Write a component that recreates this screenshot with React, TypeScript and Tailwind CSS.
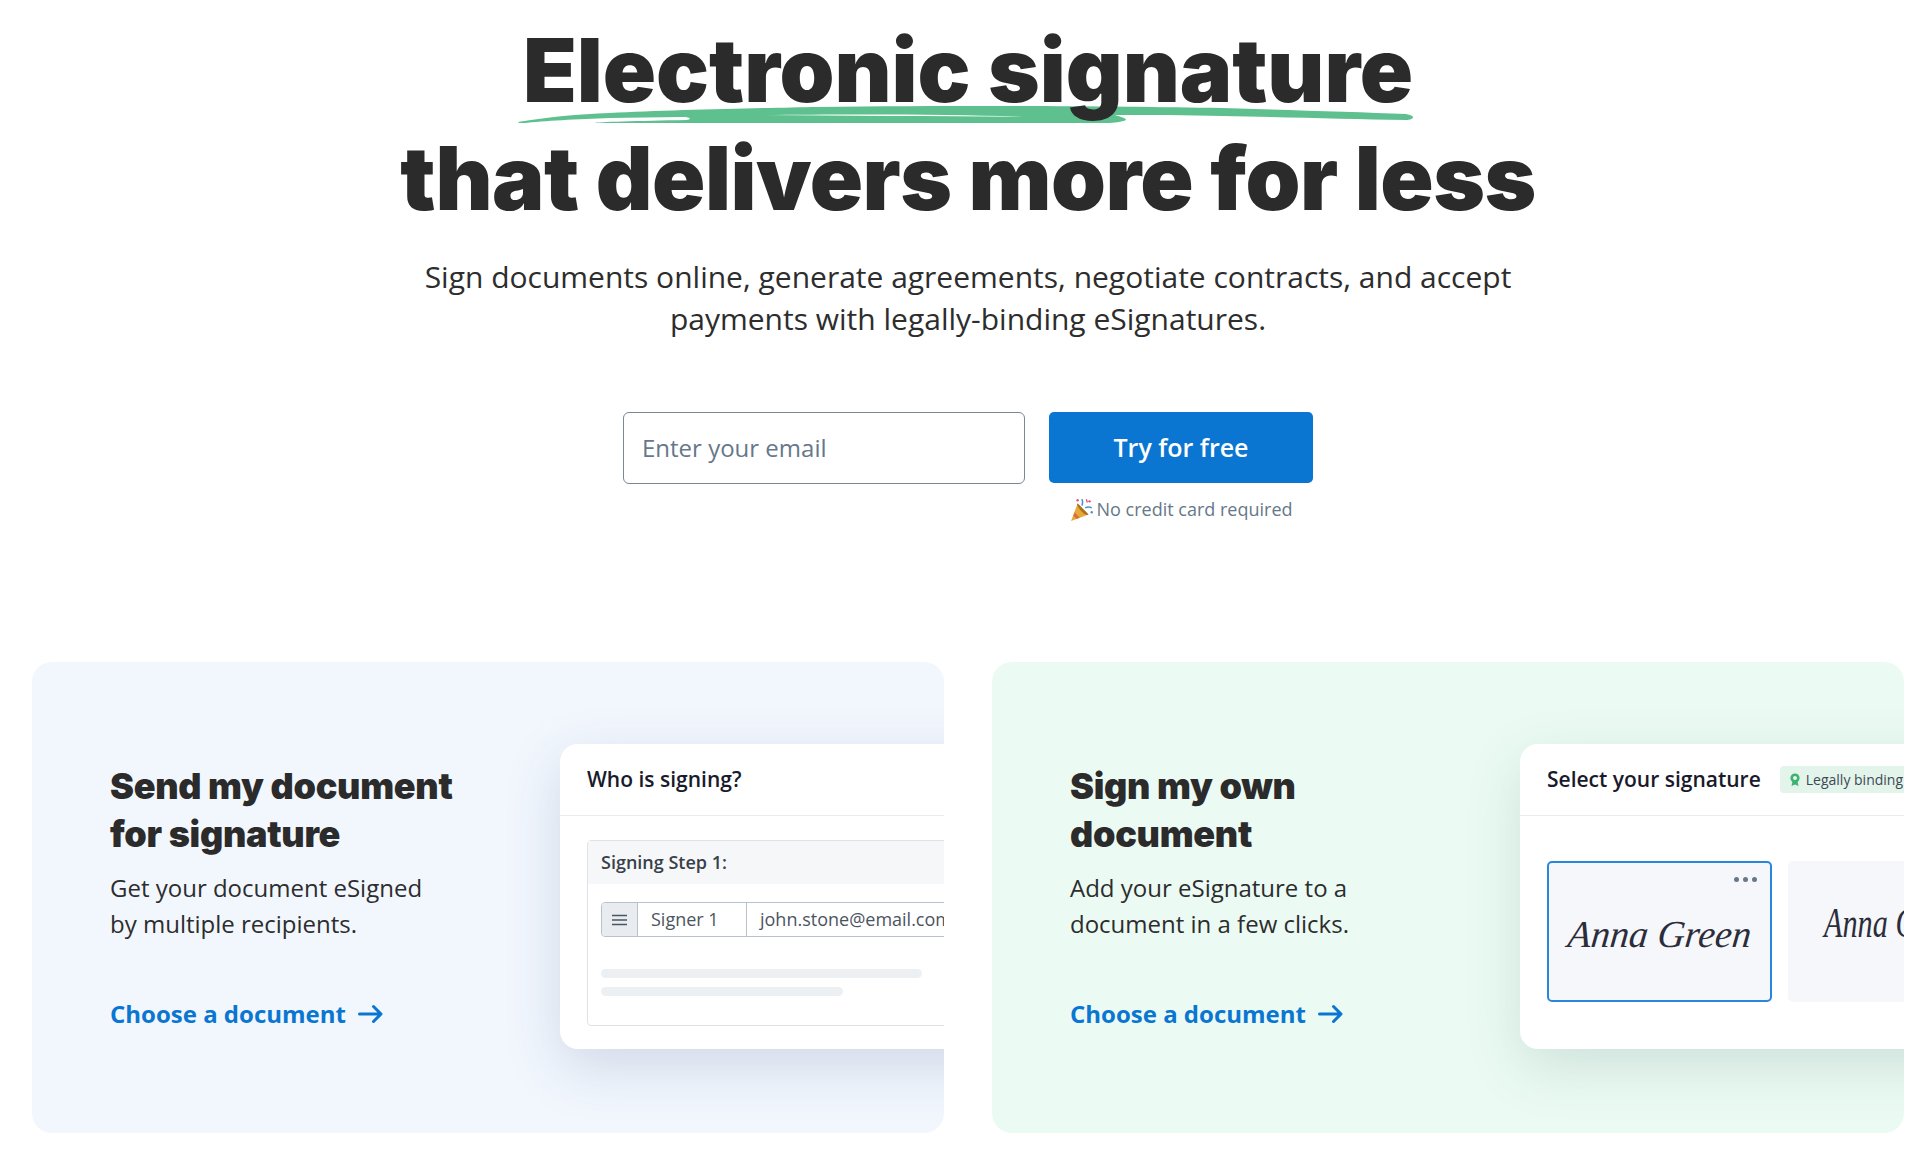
import React from "react";

const Arrow = () => (
  <svg width="25" height="20" viewBox="0 0 25 20" fill="none" stroke="#0a76d1" strokeWidth="3" strokeLinecap="round" strokeLinejoin="round">
    <path d="M1.5 10H23M15.5 2.5 23 10l-7.5 7.5" />
  </svg>
);

const Brush = () => (
  <svg className="absolute left-[518px] top-[105px] -z-10" width="895" height="18" viewBox="0 0 895 18" fill="#5fc08f">
    <path d="M0 17C30 12 60 9 92 8 150 5 245 3 300 2 360 1 420 1 475 1 560 1 640 2 704 3 770 5 840 7 888 9 893 10 895 11 895 12 895 14 892 15 888 15 830 14 770 12 704 11 670 10 630 10 597 10 603 12 608 13 608 15 604 17 596 18 589 18L77 18C75 17 120 16 168 15 176 14 170 12 165 12 140 12 115 13 92 13 60 14 25 16 6 18 2 18 0 18 0 17Z" />
    <path d="M245 10C330 9 440 9 513 12 430 11 330 11 245 10Z" fill="#ffffff" />
  </svg>
);

const Popper = () => (
  <svg width="25" height="25" viewBox="0 0 23 23">
    <path d="M7 6 1 22l16-6Z" fill="#e9a93a" />
    <path d="M4.2 14 9 19l-3 1.2-2.9-3Z" fill="#d9703a" />
    <path d="M7 6c3 3 7 7 10 10-1 1.2-3 .4-6-2.4S6 7 7 6Z" fill="#a9701f" />
    <path d="M11 8c1-2 1-4 0-6M14 10c2-1 4-1 6 0" fill="none" stroke="#4a90d9" strokeWidth="1.4" />
    <circle cx="7" cy="3" r="1.1" fill="#d8557a" />
    <circle cx="18" cy="4" r="1.1" fill="#d8557a" />
    <circle cx="20" cy="14" r="1.1" fill="#4a90d9" />
    <path d="M15 2l1 3" stroke="#d8557a" strokeWidth="1.2" />
  </svg>
);

const CardCopy = ({ title, body }: { title: string[]; body: string[] }) => (
  <div className="w-[450px] shrink-0 pt-[100px]">
    <h2 className="font-['Inter',sans-serif] text-[36px] leading-[48px] font-black tracking-[-0.3px] text-[#2b2b2b]">
      {title[0]}
      <br />
      {title[1]}
    </h2>
    <p className="mt-[12px] text-[24px] leading-[36px] text-[#2d2d2d]">
      {body[0]}
      <br />
      {body[1]}
    </p>
    <a className="mt-[54px] flex items-center gap-[12px] text-[24px] leading-[36px] font-bold text-[#0a76d1]">
      Choose a document
      <Arrow />
    </a>
  </div>
);

const WhoIsSigning = () => (
  <div className="mt-[82px] h-[305px] w-[520px] shrink-0 rounded-[18px] bg-white shadow-[0_18px_55px_rgba(50,70,110,0.17)]">
    <div className="flex h-[72px] items-center border-b border-[#e9ebee] pl-[27px] text-[21px] font-semibold text-[#191a2c]">
      Who is signing?
    </div>
    <div className="mt-[24px] ml-[27px] h-[186px] rounded-[4px] border border-[#dfe2e6]">
      <div className="flex h-[43px] items-center bg-[#f6f7f9] pl-[13px] text-[18px] font-semibold text-[#38404a]">
        Signing Step 1:
      </div>
      <div className="mt-[18px] ml-[13px] flex h-[35px] items-stretch rounded-[4px] border-[1.5px] border-[#b9c2cc] text-[18px] leading-[32px] whitespace-nowrap text-[#4b5560]">
        <div className="flex w-[36px] items-center justify-center rounded-l-[3px] border-r-[1.5px] border-[#b9c2cc] bg-[#e8ecf1]">
          <svg width="15" height="12" viewBox="0 0 15 12" stroke="#4b5560" strokeWidth="1.4">
            <path d="M0 1.5h15M0 6h15M0 10.5h15" />
          </svg>
        </div>
        <div className="w-[109px] border-r-[1.5px] border-[#b9c2cc] pl-[13px]">Signer 1</div>
        <div className="pl-[13px]">john.stone@email.com</div>
      </div>
      <div className="mt-[32px] ml-[13px] h-[9px] w-[321px] rounded-full bg-[#edf0f3]" />
      <div className="mt-[9px] ml-[13px] h-[9px] w-[242px] rounded-full bg-[#edf0f3]" />
    </div>
  </div>
);

const SelectSignature = () => (
  <div className="mt-[82px] h-[305px] w-[520px] shrink-0 rounded-[18px] bg-white shadow-[0_18px_55px_rgba(40,80,70,0.15)]">
    <div className="flex h-[72px] items-center gap-[19px] border-b border-[#e9ebee] pl-[27px] whitespace-nowrap">
      <span className="text-[21px] font-semibold text-[#191a2c]">Select your signature</span>
      <span className="flex h-[27px] items-center gap-[6px] rounded-[4px] bg-[#e3f4ea] px-[10px] text-[14px] text-[#3c4a55]">
        <svg width="10" height="14" viewBox="0 0 10 14">
          <path d="M2.5 8.5 1.5 13l3.5-1.6L8.5 13l-1-4.5Z" fill="#3cb371" />
          <circle cx="5" cy="5" r="4.6" fill="#3cb371" />
          <circle cx="5" cy="5" r="2" fill="#e3f4ea" />
        </svg>
        Legally binding
      </span>
    </div>
    <div className="mt-[45px] ml-[27px] flex gap-[16px]">
      <div className="relative flex h-[141px] w-[225px] shrink-0 items-center justify-center rounded-[5px] border-2 border-[#2a86db] bg-[#f5f7fa] pt-[6px]">
        <div className="absolute top-[14px] right-[13px] flex gap-[4px]">
          <span className="h-[5px] w-[5px] rounded-full bg-[#66788a]" />
          <span className="h-[5px] w-[5px] rounded-full bg-[#66788a]" />
          <span className="h-[5px] w-[5px] rounded-full bg-[#66788a]" />
        </div>
        <span className="-skew-x-6 font-['Liberation_Serif',serif] text-[38px] whitespace-nowrap text-[#2c2c3a] italic">Anna Green</span>
      </div>
      <div className="flex h-[141px] w-[225px] shrink-0 items-center rounded-[5px] bg-[#f5f7fa] pb-[16px] pl-[36px]">
        <span className="origin-left scale-x-[0.72] font-['Liberation_Serif',serif] text-[42px] whitespace-nowrap text-[#2c2c3a] italic">Anna Green</span>
      </div>
    </div>
  </div>
);

export default function App() {
  return (
    <div className="relative isolate h-[1161px] w-full overflow-hidden bg-white pr-[21px] font-['Open_Sans',sans-serif] text-[#2d2d2d]">
      <Brush />
      <div className="pl-[32px] text-center">
        <h1 className="pt-[16px] font-['Inter',sans-serif] text-[88px] leading-[108px] font-black text-[#2b2b2b]">
          <span className="tracking-[-0.05px]">Electronic signature</span>
          <br />
          <span className="tracking-[-0.5px]">that delivers more for less</span>
        </h1>
        <p className="mt-[24px] text-[30px] leading-[42px]">
          Sign documents online, generate agreements, negotiate contracts, and accept
          <br />
          payments with legally-binding eSignatures.
        </p>
        <div className="mt-[72px] flex justify-center gap-[24px] text-left">
          <div className="flex h-[72px] w-[402px] items-center rounded-[6px] border border-[#7a8794] pl-[18px] text-[24px] text-[#66788a]">
            Enter your email
          </div>
          <div className="flex w-[264px] flex-col items-center">
            <div className="flex h-[71px] w-full items-center justify-center rounded-[5px] bg-[#0a76d1] text-[25px] font-semibold text-white">
              Try for free
            </div>
            <div className="mt-[12px] flex items-center gap-[2px] text-[18px] leading-[28px] text-[#66788a]">
              <Popper />
              No credit card required
            </div>
          </div>
        </div>
      </div>
      <div className="mt-[139px] flex gap-[48px] pl-[32px]">
        <section className="flex h-[471px] w-[912px] shrink-0 overflow-hidden rounded-[20px] bg-[#f2f7fe] pl-[78px]">
          <CardCopy title={["Send my document", "for signature"]} body={["Get your document eSigned", "by multiple recipients."]} />
          <WhoIsSigning />
        </section>
        <section className="flex h-[471px] w-[912px] shrink-0 overflow-hidden rounded-[20px] bg-[#ebfbf4] pl-[78px]">
          <CardCopy title={["Sign my own", "document"]} body={["Add your eSignature to a", "document in a few clicks."]} />
          <SelectSignature />
        </section>
      </div>
    </div>
  );
}
